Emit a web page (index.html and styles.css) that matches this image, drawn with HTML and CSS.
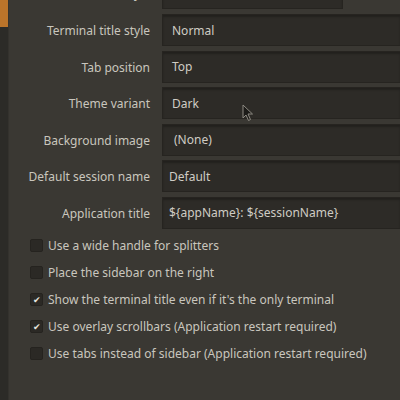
FILE: index.html
```html
<!DOCTYPE html>
<html lang="en">
<head>
    <meta charset="UTF-8">
    <meta name="viewport" content="width=device-width, initial-scale=1.0">
    <title>Preferences</title>
    <link rel="stylesheet" href="styles.css">
</head>
<body>

    <div id="window">

        <!-- Sidebar strip with the selected page marker -->
        <aside class="sidebar">
            <div class="sidebar-active"></div>
        </aside>

        <!-- Appearance page -->
        <main class="page">
            <div class="form-grid">
                <label class="form-label">Window style</label>
                <div class="combo combo-short">Normal</div>

                <label class="form-label">Terminal title style</label>
                <div class="combo">Normal</div>

                <label class="form-label">Tab position</label>
                <div class="combo">Top</div>

                <label class="form-label">Theme variant</label>
                <div class="combo">Dark</div>

                <label class="form-label">Background image</label>
                <div class="combo combo-file">(None)</div>

                <label class="form-label">Default session name</label>
                <div class="entry">Default</div>

                <label class="form-label">Application title</label>
                <div class="entry">${appName}: ${sessionName}</div>
            </div>

            <ul class="check-list">
                <li class="check-row"><span class="check-box"></span>Use a wide handle for splitters</li>
                <li class="check-row"><span class="check-box"></span>Place the sidebar on the right</li>
                <li class="check-row"><span class="check-box checked">&#10004;</span>Show the terminal title even if it's the only terminal</li>
                <li class="check-row"><span class="check-box checked">&#10004;</span>Use overlay scrollbars (Application restart required)</li>
                <li class="check-row"><span class="check-box"></span>Use tabs instead of sidebar (Application restart required)</li>
            </ul>

            <!-- mouse pointer hovering over the theme combo -->
            <svg class="pointer" width="12" height="18" viewBox="0 0 12 18">
                <path d="M1 1 L1 14 L4 11 L6.5 16.5 L8.5 15.5 L6 10 L10.5 10 Z" fill="#1c1b18" stroke="#8d8a82" stroke-width="1"/>
            </svg>
        </main>

    </div>

</body>
</html>
```

FILE: styles.css
```css
/* General styles */
body {
    font-family: "Noto Sans", "Liberation Sans", sans-serif;
    font-size: 12px;
    margin: 0;
    background-color: #3a3833;
    color: #c9c6be;
    overflow: hidden;
}

#window {
    display: flex;
    height: 400px;
}

/* Left sidebar strip */
.sidebar {
    width: 8px;
    background-color: #2c2b27;
    border-right: 1px solid #34322d;
}

.sidebar-active {
    height: 27px;
    background-color: #bb742a;
}

/* Main page */
.page {
    position: relative;
    flex: 1;
}

/* Label / value rows */
.form-grid {
    display: grid;
    grid-template-columns: 141px 1fr;
    column-gap: 12px;
    row-gap: 4.6px;
    margin-top: -22.6px;
}

.form-label {
    text-align: right;
    align-self: center;
    padding-top: 1px;
    white-space: nowrap;
}

.combo,
.entry {
    height: 32px;
    box-sizing: border-box;
    display: flex;
    align-items: center;
    padding: 0 8px 0 9px;
    background-color: #2d2b27;
    border: 1px solid #262420;
    border-right: none;
    box-shadow: inset 0 2px 2px rgba(0, 0, 0, 0.25);
    color: #cfccc4;
}

.combo-short {
    width: 181px;
    border-right: 1px solid #262420;
}

.combo-file {
    padding-left: 11px;
}

.entry {
    padding-left: 6px;
}

/* Check buttons */
.check-list {
    list-style-type: none;
    margin: 3px 0 0 0;
    padding: 0 0 0 21px;
}

.check-row {
    display: flex;
    align-items: center;
    gap: 5px;
    height: 27px;
    white-space: nowrap;
}

.check-box {
    flex: none;
    width: 13px;
    height: 13px;
    box-sizing: border-box;
    border: 1px solid #25231f;
    border-radius: 2px;
    background-color: #2b2925;
    color: #e6e4de;
    font-size: 9px;
    line-height: 11px;
    text-align: center;
}

/* Mouse pointer overlay */
.pointer {
    position: absolute;
    left: 233px;
    top: 104px;
}
```
